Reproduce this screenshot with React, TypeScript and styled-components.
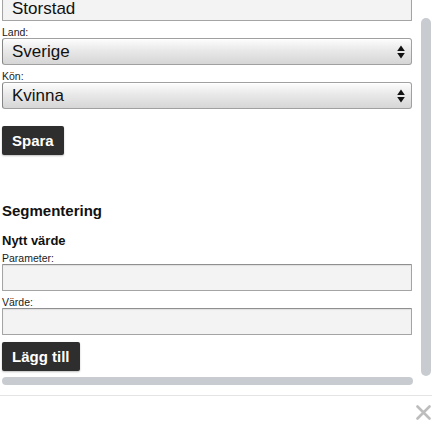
import React, { useLayoutEffect, useRef } from "react";
import styled, { createGlobalStyle } from "styled-components";

const Global = createGlobalStyle`
  html, body { margin: 0; padding: 0; background: #ffffff; }
  body { font-family: "Liberation Sans", Arial, Helvetica, sans-serif; color: #111; }
  * { box-sizing: border-box; }
`;

const Modal = styled.div`
  width: 432px;
  height: 429px;
  display: flex;
  flex-direction: column;
  background: #fff;
`;

const Viewport = styled.div`
  position: relative;
  height: 395px;
  flex: none;
`;

const Scroller = styled.div`
  position: relative;
  height: 100%;
  overflow: hidden;
`;

const Content = styled.div`
  display: flex;
  flex-direction: column;
  align-items: flex-start;
  padding: 0 0 40px 2px;
`;

const Field = styled.div`
  display: flex;
  flex-direction: column;
  width: 410px;
  & + & {
    margin-top: 6px;
  }
`;

const Label = styled.label`
  font-size: 10.5px;
  line-height: 11px;
  height: 11px;
  color: #1a1a1a;
`;

const TextInput = styled.input`
  width: 410px;
  height: 27px;
  margin: 0;
  padding: 2px 9px 0;
  border: 1px solid #a4a4a4;
  border-top-color: #8f8f8f;
  border-radius: 1px;
  background: #f3f3f3;
  box-shadow: inset 0 1px 1px rgba(0, 0, 0, 0.08);
  font-family: "Liberation Sans", Arial, sans-serif;
  font-size: 17px;
  color: #111;
  outline: none;
`;

const SelectWrap = styled.div`
  position: relative;
  width: 410px;
  height: 27px;
`;

const Select = styled.select`
  appearance: none;
  -webkit-appearance: none;
  width: 100%;
  height: 100%;
  margin: 0;
  padding: 0 24px 0 9px;
  border: 1px solid #a0a0a0;
  border-left-color: #858585;
  border-radius: 3px;
  background: linear-gradient(#fdfdfd 0%, #e9e9e9 45%, #d6d6d6 100%);
  box-shadow: inset 0 1px 0 #ffffff;
  font-family: "Liberation Sans", Arial, sans-serif;
  font-size: 17px;
  color: #111;
  outline: none;
`;

const Arrows = styled.svg`
  position: absolute;
  right: 7px;
  top: 50%;
  margin-top: -7px;
  pointer-events: none;
`;

const Button = styled.button`
  height: 29px;
  margin: 0;
  padding: 0 10px;
  border: none;
  border-radius: 2px;
  background: #2e2e2e;
  color: #ffffff;
  font-family: "Liberation Sans", Arial, sans-serif;
  font-weight: bold;
  font-size: 15px;
  box-shadow: 0 1px 2px rgba(0, 0, 0, 0.25);
  cursor: pointer;
`;

const Group = styled.div<{ $top: number }>`
  display: flex;
  flex-direction: column;
  align-items: flex-start;
  margin-top: ${(p) => p.$top}px;
`;

const SectionTitle = styled.h3`
  margin: 0;
  font-size: 15px;
  line-height: 17px;
  font-weight: bold;
  color: #111;
`;

const SubTitle = styled.h4`
  margin: 14px 0 5px;
  font-size: 13px;
  line-height: 15px;
  font-weight: bold;
  color: #111;
`;

const HBar = styled.div`
  position: absolute;
  left: 2px;
  top: 377px;
  width: 411px;
  height: 8px;
  border-radius: 4px;
  background: #c8ccd1;
`;

const VBar = styled.div`
  position: absolute;
  left: 421px;
  top: 18px;
  width: 10px;
  height: 358px;
  border-radius: 5px;
  background: #c8ccd1;
`;

const Footer = styled.div`
  flex: 1;
  display: flex;
  justify-content: flex-end;
  align-items: center;
  border-top: 1px solid #e4e4e4;
  padding-right: 1px;
`;

const Close = styled.button`
  width: 16px;
  height: 16px;
  padding: 0;
  margin: 0;
  border: none;
  background: transparent;
  display: flex;
  align-items: center;
  justify-content: center;
  cursor: pointer;
`;

const SelectField: React.FC<{ value: string }> = ({ value }) => (
  <SelectWrap>
    <Select defaultValue={value}>
      <option>{value}</option>
    </Select>
    <Arrows width="8" height="14" viewBox="0 0 8 14">
      <path d="M4 0.5 L7.8 6 L0.2 6 Z" fill="#111" />
      <path d="M4 13.5 L7.8 8 L0.2 8 Z" fill="#111" />
    </Arrows>
  </SelectWrap>
);

export default function App() {
  const scrollRef = useRef<HTMLDivElement>(null);
  const firstRef = useRef<HTMLInputElement>(null);

  useLayoutEffect(() => {
    if (scrollRef.current && firstRef.current) {
      scrollRef.current.scrollTop = firstRef.current.offsetTop + 6;
    }
  }, []);

  return (
    <>
      <Global />
      <Modal>
        <Viewport>
          <Scroller ref={scrollRef}>
            <Content>
              <Field>
                <Label>Ort:</Label>
                <TextInput ref={firstRef} defaultValue="Storstad" />
              </Field>
              <Field>
                <Label>Land:</Label>
                <SelectField value="Sverige" />
              </Field>
              <Field>
                <Label>Kön:</Label>
                <SelectField value="Kvinna" />
              </Field>
              <Group $top={17}>
                <Button>Spara</Button>
              </Group>
              <Group $top={47}>
                <SectionTitle>Segmentering</SectionTitle>
                <SubTitle>Nytt värde</SubTitle>
                <Field>
                  <Label>Parameter:</Label>
                  <TextInput />
                </Field>
                <Field>
                  <Label>Värde:</Label>
                  <TextInput />
                </Field>
              </Group>
              <Group $top={7}>
                <Button>Lägg till</Button>
              </Group>
            </Content>
          </Scroller>
          <VBar />
          <HBar />
        </Viewport>
        <Footer>
          <Close aria-label="Stäng">
            <svg width="15" height="15" viewBox="0 0 15 15">
              <path
                d="M1.5 1.5 L13.5 13.5 M13.5 1.5 L1.5 13.5"
                stroke="#bdbdbd"
                strokeWidth="2.6"
                strokeLinecap="round"
              />
            </svg>
          </Close>
        </Footer>
      </Modal>
    </>
  );
}
